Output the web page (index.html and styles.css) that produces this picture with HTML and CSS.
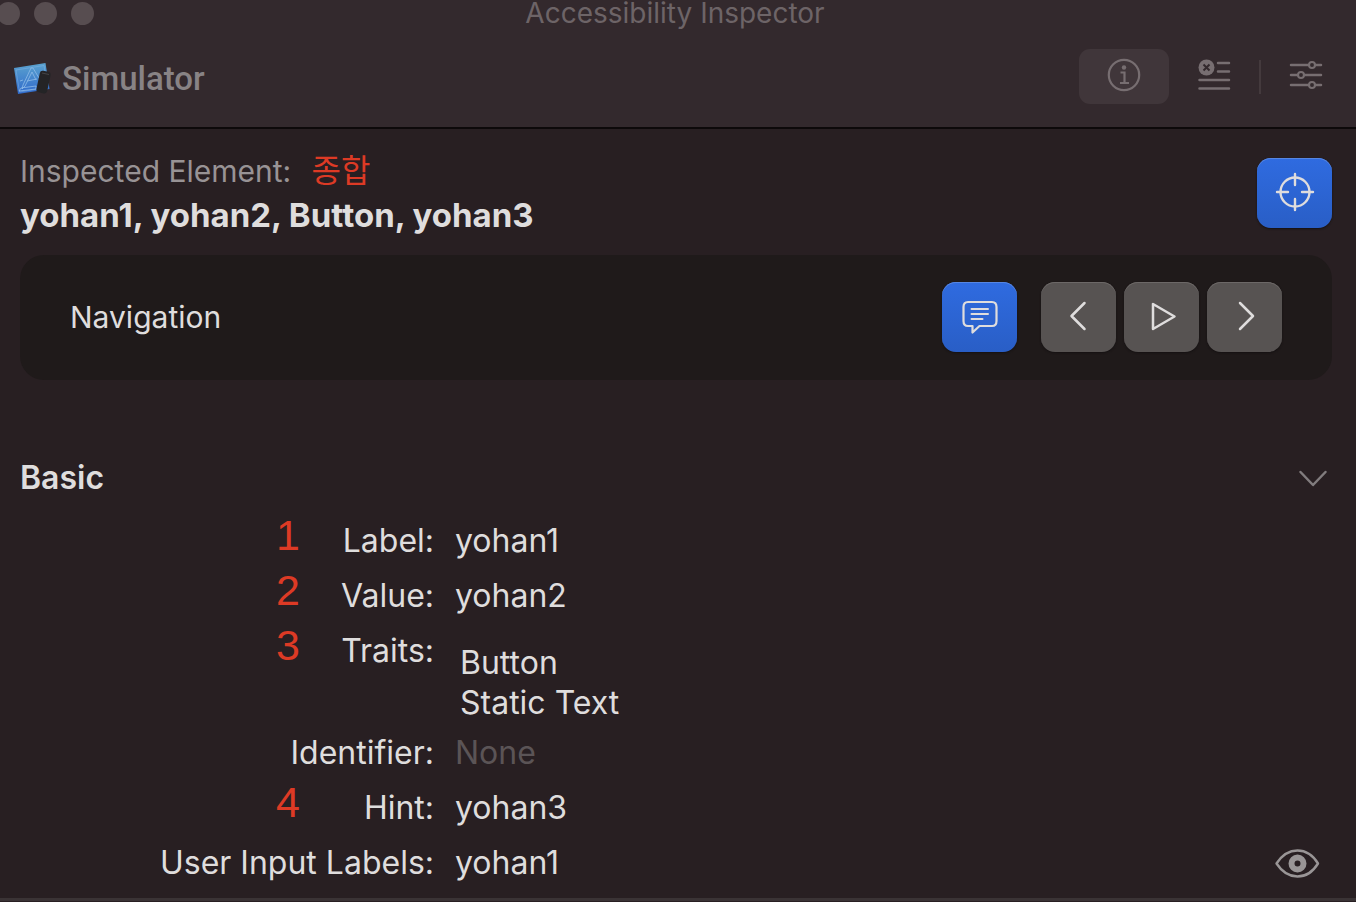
FILE: index.html
```
<!DOCTYPE html>
<html lang="en">
<head>
    <meta charset="UTF-8">
    <meta name="viewport" content="width=device-width, initial-scale=1.0">
    <title>Accessibility Inspector</title>
    <link rel="stylesheet" href="styles.css">
</head>
<body>
    <header class="toolbar">
        <div class="titlebar">
            <div class="dots">
                <span class="dot"></span>
                <span class="dot"></span>
                <span class="dot"></span>
            </div>
            <h1>Accessibility Inspector</h1>
        </div>
        <div class="tools">
            <button class="target" type="button">
                <svg width="40" height="36" viewBox="0 0 40 36">
                    <defs>
                        <linearGradient id="sky" x1="0" y1="0" x2="0" y2="1">
                            <stop offset="0" stop-color="#5ba3cf"/>
                            <stop offset="1" stop-color="#2f69cb"/>
                        </linearGradient>
                    </defs>
                    <path d="M2 7 L33.500 2 L37.500 28 L6 33 Z" fill="url(#sky)"/>
                    <g fill="none" stroke="#8fbce8" stroke-width="1">
                        <path d="M4 9 L32 4.500 L35.500 26.500 L7.500 31 Z" opacity=".4"/>
                        <path d="M19 7 L11 24 L10 28 L13 25 L20 11 L24 19 M19 7 L21 7 L27 17 M8 20 L11 19 M15 20 L25 18 M7 30 L9 27 L24 25 L24 28 Z" opacity=".8"/>
                    </g>
                    <rect x="26" y="10" width="11" height="22" rx="3" transform="rotate(12 31 21)" fill="#242426"/>
                    <path d="M30 12 L37 13.500" stroke="#454547" stroke-width="1"/>
                </svg>
                <span>Simulator</span>
            </button>
            <div class="tabs">
                <button class="tab active" type="button" aria-label="Inspection">
                    <svg width="34" height="34" viewBox="0 0 34 34" fill="none" stroke="currentColor" stroke-width="2.200">
                        <circle cx="17" cy="17" r="15.200"/>
                        <circle cx="17" cy="9.500" r="2.200" fill="currentColor" stroke="none"/>
                        <path d="M13.500 14.500 H17.500 V25 M13 25 H22"/>
                    </svg>
                </button>
                <button class="tab" type="button" aria-label="Audit">
                    <svg width="34" height="34" viewBox="0 0 34 34" fill="none" stroke="currentColor" stroke-width="2.500">
                        <circle cx="9.500" cy="9.500" r="8" fill="currentColor" stroke="none"/>
                        <path d="M6.500 6.500 L12.500 12.500 M12.500 6.500 L6.500 12.500" stroke="#33292d" stroke-width="2"/>
                        <path d="M21 5 H32 M21 13.500 H32 M2.500 22 H32 M2.500 30.500 H32" stroke-linecap="round"/>
                    </svg>
                </button>
                <span class="divider"></span>
                <button class="tab" type="button" aria-label="Settings">
                    <svg width="34" height="34" viewBox="0 0 34 34" fill="none" stroke="currentColor" stroke-width="2.500" stroke-linecap="round">
                        <path d="M2 7 H20 M26 7 H32 M2 17 H9 M15 17 H32 M2 27 H20 M26 27 H32"/>
                        <g stroke-width="2">
                            <circle cx="23" cy="7" r="3"/>
                            <circle cx="12" cy="17" r="3"/>
                            <circle cx="23" cy="27" r="3"/>
                        </g>
                    </svg>
                </button>
            </div>
        </div>
    </header>

    <main>
        <section class="inspected">
            <div>
                <p class="caption">Inspected Element: <span class="note-text" lang="ko">종합</span></p>
                <h2>yohan1, yohan2, Button, yohan3</h2>
            </div>
            <button class="btn blue pick" type="button" aria-label="Pick element">
                <svg width="40" height="40" viewBox="0 0 40 40" fill="none" stroke="currentColor" stroke-width="2.400" stroke-linecap="round">
                    <circle cx="20" cy="20" r="14.500"/>
                    <path d="M20 2 V13 M20 27 V38 M2 20 H13 M27 20 H38"/>
                </svg>
            </button>
        </section>

        <section class="navigation">
            <h3>Navigation</h3>
            <div class="nav-buttons">
                <button class="btn blue speak" type="button" aria-label="Speak">
                    <svg width="40" height="40" viewBox="0 0 40 40" fill="none" stroke="currentColor" stroke-width="2.200" stroke-linejoin="round" stroke-linecap="round">
                        <path d="M8 5 H32 Q36.500 5 36.500 10 V24 Q36.500 29 32 29 H19.500 L12.500 35.500 V29 H8 Q3.500 29 3.500 24 V10 Q3.500 5 8 5 Z"/>
                        <path d="M11.500 12 H28 M11.500 17 H28 M11.500 22 H22.500" stroke-width="2"/>
                    </svg>
                </button>
                <button class="btn" type="button" aria-label="Previous">
                    <svg width="40" height="40" viewBox="0 0 40 40" fill="none" stroke="currentColor" stroke-width="2.500" stroke-linecap="round" stroke-linejoin="round">
                        <path d="M25.500 6 L12.500 19 L25.500 32"/>
                    </svg>
                </button>
                <button class="btn" type="button" aria-label="Play">
                    <svg width="40" height="40" viewBox="0 0 40 40" fill="none" stroke="currentColor" stroke-width="2.500" stroke-linejoin="round">
                        <path d="M11 7 V32 L32.500 19.500 Z"/>
                    </svg>
                </button>
                <button class="btn" type="button" aria-label="Next">
                    <svg width="40" height="40" viewBox="0 0 40 40" fill="none" stroke="currentColor" stroke-width="2.500" stroke-linecap="round" stroke-linejoin="round">
                        <path d="M15 6 L28 19 L15 32"/>
                    </svg>
                </button>
            </div>
        </section>

        <section class="basic">
            <div class="section-head">
                <h3>Basic</h3>
                <button class="icon-btn" type="button" aria-label="Collapse">
                    <svg width="30" height="20" viewBox="0 0 30 20" fill="none" stroke="#817c7e" stroke-width="2.500" stroke-linecap="round" stroke-linejoin="round">
                        <path d="M2.500 4 L15 17 L27.500 4"/>
                    </svg>
                </button>
            </div>
            <dl>
                <dt><span class="note">1</span>Label:</dt>
                <dd>yohan1</dd>
                <dt><span class="note">2</span>Value:</dt>
                <dd>yohan2</dd>
                <dt><span class="note">3</span>Traits:</dt>
                <dd class="traits">Button<br>Static Text</dd>
                <dt>Identifier:</dt>
                <dd class="none">None</dd>
                <dt><span class="note">4</span>Hint:</dt>
                <dd>yohan3</dd>
                <dt>User Input Labels:</dt>
                <dd class="with-icon">
                    yohan1
                    <button class="icon-btn eye" type="button" aria-label="Show labels">
                        <svg width="46" height="30" viewBox="0 0 46 30" fill="none" stroke="#999596" stroke-width="2.400">
                            <path d="M2.500 15.500 Q11 2.500 23.500 2.500 Q36 2.500 44 15.500 Q36 28.500 23.500 28.500 Q11 28.500 2.500 15.500 Z" stroke-linejoin="round"/>
                            <circle cx="23.500" cy="15.500" r="6" stroke-width="6"/>
                        </svg>
                    </button>
                </dd>
            </dl>
        </section>
    </main>
</body>
</html>
```
FILE: styles.css
```
* {
    margin: 0;
    padding: 0;
    box-sizing: border-box;
}

body {
    background-color: #281f22;
    color: #dfdddd;
    font-family: Inter, "Liberation Sans", "Noto Sans CJK KR", sans-serif;
    font-size: 32px;
    line-height: 40px;
    overflow-x: hidden;
}

button {
    border: none;
    background: none;
    color: inherit;
    font: inherit;
}

svg {
    display: block;
}

/* toolbar */
.toolbar {
    background-color: #33292d;
    border-bottom: 2px solid #0d090a;
    padding-bottom: 23px;
}

.titlebar {
    display: grid;
    grid-template-columns: 1fr auto 1fr;
    align-items: center;
    padding: 0 6px 0 0;
    height: 27px;
}

.dots {
    display: flex;
    gap: 14px;
    margin-left: -3px;
}

.dot {
    width: 23px;
    height: 23px;
    border-radius: 50%;
    background-color: #574d50;
}

.titlebar h1 {
    color: #6d6467;
    font-size: 28px;
    font-weight: 400;
    line-height: 27px;
}

.tools {
    display: flex;
    justify-content: space-between;
    align-items: center;
    padding: 22px 5px 0 12px;
}

.target {
    display: flex;
    align-items: center;
    gap: 10px;
    padding-top: 4px;
    color: #888385;
    font-family: Roboto, sans-serif;
    font-size: 33px;
    font-weight: 500;
}

.tabs {
    display: flex;
    align-items: center;
    color: #776e71;
}

.tab {
    display: flex;
    align-items: center;
    justify-content: center;
    width: 90px;
    height: 55px;
    padding-bottom: 3px;
    border-radius: 11px;
}

.tab.active {
    background-color: #40363a;
}

.divider {
    width: 2px;
    height: 34px;
    background-color: #443a3d;
}

/* inspected element */
main {
    border-bottom: 3px solid #3a3335;
}

.inspected {
    display: flex;
    justify-content: space-between;
    align-items: center;
    padding: 20px 24px 18px 20px;
}

.caption {
    color: #989395;
    font-size: 30px;
    line-height: 44px;
}

.note-text {
    color: #dd3a25;
    font-size: 32px;
    margin-left: 12px;
}

.inspected h2 {
    font-size: 33px;
    font-weight: 700;
    line-height: 44px;
}

.btn {
    display: flex;
    align-items: center;
    justify-content: center;
    width: 75px;
    height: 70px;
    border-radius: 14px;
    background-color: #575352;
    box-shadow: inset 0 1px 0 #6c6867, 0 1px 2px #151112;
}

.btn.blue {
    background: linear-gradient(#2f6be0, #295ec6);
    box-shadow: inset 0 1px 0 #5686e2, 0 1px 2px #151112;
}

.pick {
    padding-bottom: 3px;
}

/* navigation */
.navigation {
    display: flex;
    justify-content: space-between;
    align-items: center;
    margin: 0 24px 0 20px;
    padding: 27px 50px 28px;
    border-radius: 24px;
    background-color: #1f1a1a;
}

.navigation h3 {
    font-size: 30px;
    font-weight: 400;
}

.nav-buttons {
    display: flex;
    gap: 8px;
}

.speak {
    margin-right: 16px;
}

/* basic */
.basic {
    padding: 78px 24px 0 20px;
}

.section-head {
    display: flex;
    justify-content: space-between;
    align-items: center;
    margin-bottom: 23px;
    padding-right: 4px;
}

.section-head h3 {
    font-size: 32px;
    font-weight: 600;
}

dl {
    display: grid;
    grid-template-columns: 414px 1fr;
    column-gap: 21px;
}

dt {
    position: relative;
    text-align: right;
}

dd {
    padding-bottom: 15px;
}

.traits {
    padding: 12px 5px 10px;
}

.none {
    color: #5b5456;
}

.with-icon {
    display: flex;
    justify-content: space-between;
    align-items: center;
}

.eye {
    padding-right: 12px;
}

.note {
    position: absolute;
    left: 256px;
    top: -6px;
    color: #dd3a25;
    font-family: "Liberation Sans", sans-serif;
    font-size: 43px;
}
```
